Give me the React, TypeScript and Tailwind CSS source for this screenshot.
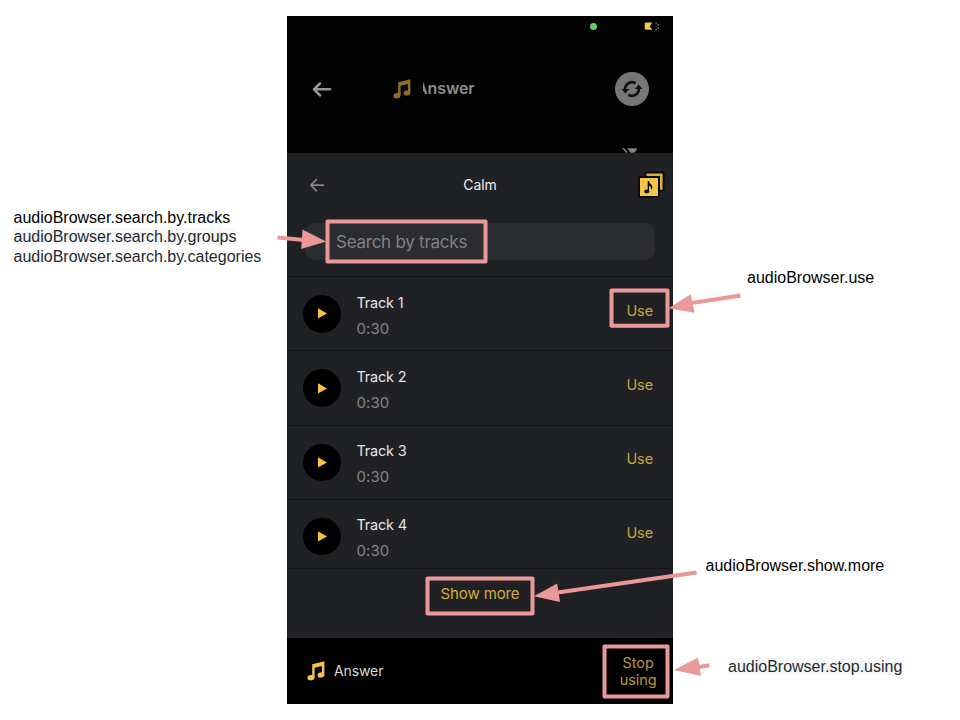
import React from "react";

function Notes({ className }: { className: string }) {
  return (
    <svg className={className} width="18" height="20" viewBox="0 0 18 20" fill="currentColor">
      <path d="M5.2 3.2 17.4.3V13.8H14.9V5L7.6 6.8V16.5H5.2Z" />
      <ellipse cx="3.9" cy="16.7" rx="3.5" ry="2.7" transform="rotate(-8 3.9 16.7)" />
      <ellipse cx="13.9" cy="14" rx="3.4" ry="2.6" transform="rotate(-8 13.9 14)" />
    </svg>
  );
}

function Battery() {
  return (
    <svg width="16" height="9" viewBox="0 0 16 9">
      <path d="M2 .5H8.2L6.4 3.4 5.6 5.5H7L8.2 7.8H2Q.7 7.5.7 6V2Q.7.7 2 .5Z" fill="#f6c944" />
      <path d="M11.5 1h1.4M11.5 7.5h1.4M14.1 2v1.8M14.1 5v2" stroke="#c5a23c" strokeWidth="1" />
    </svg>
  );
}

function Swap() {
  return (
    <svg width="34" height="34" viewBox="0 0 34 34">
      <circle cx="17" cy="17" r="17" fill="#777" />
      <g fill="none" stroke="#111214" strokeWidth="2.8">
        <path d="M10.2 18A6.9 6.9 0 0 1 20.6 11.2" />
        <path d="M23.8 16A6.9 6.9 0 0 1 13.4 22.8" />
      </g>
      <path d="M6.3 17h8l-3.9 4.6ZM27.7 17h-8l3.9-4.6Z" fill="#111214" />
    </svg>
  );
}

function Library() {
  return (
    <svg width="27" height="27" viewBox="0 0 27 27">
      <rect x="6.5" y=".5" width="20" height="20" rx="1.5" fill="#08090a" />
      <path d="M8.4 2.4H24.6V18.7H22V5H8.4Z" fill="#dcae3b" />
      <rect x=".2" y="5.2" width="21.5" height="21.5" rx="1.5" fill="#08090a" />
      <rect x="2" y="7" width="18" height="18" fill="#f6c445" />
      <path d="M9.7 10h1.4c0 3 3.5 3.4 3.3 6.3-.1 1.2-.8 2-1.4 2.4.3-2.2-.3-3.5-1.9-4.3v6.1H9.7Z" fill="#08090a" />
      <ellipse cx="8.7" cy="20.4" rx="2.5" ry="1.9" fill="#08090a" />
    </svg>
  );
}

function Track({ n }: { n: number }) {
  return (
    <div className="flex h-[74.3px] shrink-0 border-t border-[#131416] pl-4 pr-5">
      <div className="mt-[18px] flex size-[37.5px] items-center justify-center rounded-full bg-black">
        <svg className="ml-px" width="9" height="11" viewBox="0 0 9 11">
          <path d="M0 .3 9 5.4 0 10.6Z" fill="#f6c440" />
        </svg>
      </div>
      <div className="ml-4 pt-[15.5px] text-[15px] leading-5">
        <div className="w-max text-[14.5px] tracking-[-0.2px] text-[#e4e4e5]">Track {n}</div>
        <div className="mt-[6px] w-max tracking-[0.1px] text-[#858588]">0:30</div>
      </div>
      <div className="ml-auto pt-[23.5px] text-[14.5px] leading-5 tracking-[-0.1px] text-[#c9a53e]">Use</div>
    </div>
  );
}

function Annotations() {
  return (
    <svg className="pointer-events-none absolute inset-0" width="960" height="720">
      <g fill="none" stroke="#ea9999" strokeWidth="4" strokeLinejoin="round">
        <rect x="327.5" y="221.5" width="158" height="40" />
        <rect x="611.5" y="290.5" width="56" height="35.2" />
        <rect x="427.5" y="578.5" width="105" height="35" />
        <rect x="604.5" y="646.5" width="63" height="50" />
        <path d="M277.5 237.6 304 240M740.5 295.4 690 303.2M696.5 572.6 556 592.8M709.5 665.3 697 667.3" />
      </g>
      <path d="M326 241.5 302.5 229.5 301.2 249ZM668.5 308.3 690.7 294.3 694.7 312.8ZM533.8 596.3 557.2 583.4 560 602ZM674 670 698 657.5 701 676Z" fill="#ea9999" />
    </svg>
  );
}

export default function App() {
  return (
    <main className="relative flex h-[720px] w-[960px] overflow-hidden bg-white font-['Liberation_Sans',Arial,sans-serif] text-base leading-[19.3px]">
      <aside className="w-[287px] shrink-0 pl-[13.5px] pt-[208px] text-[#24292f]">
        <div className="text-black">audioBrowser.search.by.tracks</div>
        <div><span className="bg-[#f6f8fa]">audioBrowser.search.by.groups</span></div>
        <div>audioBrowser.search.by.categories</div>
      </aside>
      <section className="mt-4 flex h-[688px] w-[386px] shrink-0 flex-col overflow-hidden bg-[#202124] font-[Inter,sans-serif]">
        <header className="flex h-[137px] shrink-0 flex-col bg-[#020203]">
          <div className="flex h-[21px] items-center pl-[302.5px] pr-[13px]">
            <span className="size-[7px] rounded-full bg-[#65ca6b]" />
            <span className="ml-auto"><Battery /></span>
          </div>
          <div className="mt-[35px] flex h-[34px] items-center pl-[25px] pr-6">
            <svg width="20" height="16" viewBox="0 0 20 16" fill="none" stroke="#969696" strokeWidth="2.6" strokeLinecap="round" strokeLinejoin="round">
              <path d="M18 8.3H2M8 2.3 2 8.3l6 6" />
            </svg>
            <Notes className="ml-[60.5px] text-[#91701b]" />
            <div className="relative ml-[5.5px] w-max text-base font-semibold leading-5 tracking-[-0.1px] text-[#8c8c8d]">
              <span className="relative -top-px">Answer</span>
              <span className="absolute inset-y-0 left-0 w-[7px] bg-[#020203]" />
            </div>
            <span className="ml-auto"><Swap /></span>
          </div>
          <svg className="ml-[335px] mt-auto" width="18" height="5" viewBox="0 0 18 5">
            <path d="M1 0 5 4.5" stroke="#828283" strokeWidth="1.6" />
            <path d="M5 .3h10q-.5 3.5-3 4.5H8.6Z" fill="#828283" />
          </svg>
        </header>
        <div className="flex h-16 shrink-0 items-center justify-between pl-[22px] pr-2">
          <svg width="17" height="15" viewBox="0 0 17 15" fill="none" stroke="#858588" strokeWidth="1.7" strokeLinecap="round" strokeLinejoin="round">
            <path d="M14.5 7.2H2M7.5 1.5 1.8 7.2l5.7 5.7" />
          </svg>
          <h1 className="-ml-[4px] text-[14px] leading-5 tracking-[-0.1px] text-[#ededee]">Calm</h1>
          <div className="-mt-px"><Library /></div>
        </div>
        <div className="ml-[18px] mt-[6px] flex h-[37px] w-[350px] shrink-0 items-center rounded-[10px] bg-[#2b2c2f] pl-[31px]">
          <span className="text-[17px] leading-5 tracking-[-0.25px] text-[#828286]">Search by tracks</span>
        </div>
        <div className="mt-4 flex h-[292px] shrink-0 flex-col overflow-hidden">
          {[1, 2, 3, 4].map((n) => <Track key={n} n={n} />)}
        </div>
        <div className="flex h-[70px] shrink-0 justify-center border-t border-[#131416] pt-[15px] text-[15px] leading-5 tracking-[-0.12px] text-[#d2ac40]">Show more</div>
        <footer className="flex flex-1 items-center bg-black pl-[19.5px] pr-[16.5px]">
          <Notes className="text-[#f6c24a]" />
          <span className="ml-[9.5px] text-sm leading-5 tracking-[-0.1px] text-[#d9d9da]">Answer</span>
          <span className="ml-auto text-center text-[14.5px] leading-[17px] tracking-[-0.1px] text-[#b9963c]">Stop<br />using</span>
        </footer>
      </section>
      <aside className="flex flex-1 flex-col pt-[267.5px]">
        <div className="ml-[74px]">audioBrowser.use</div>
        <div className="ml-[32.5px] mt-[269.7px]">audioBrowser.show.more</div>
        <div className="ml-[55px] mt-[81px] text-[#24292f]"><span className="bg-[#f6f8fa]">audioBrowser.stop.using</span></div>
      </aside>
      <Annotations />
    </main>
  );
}
